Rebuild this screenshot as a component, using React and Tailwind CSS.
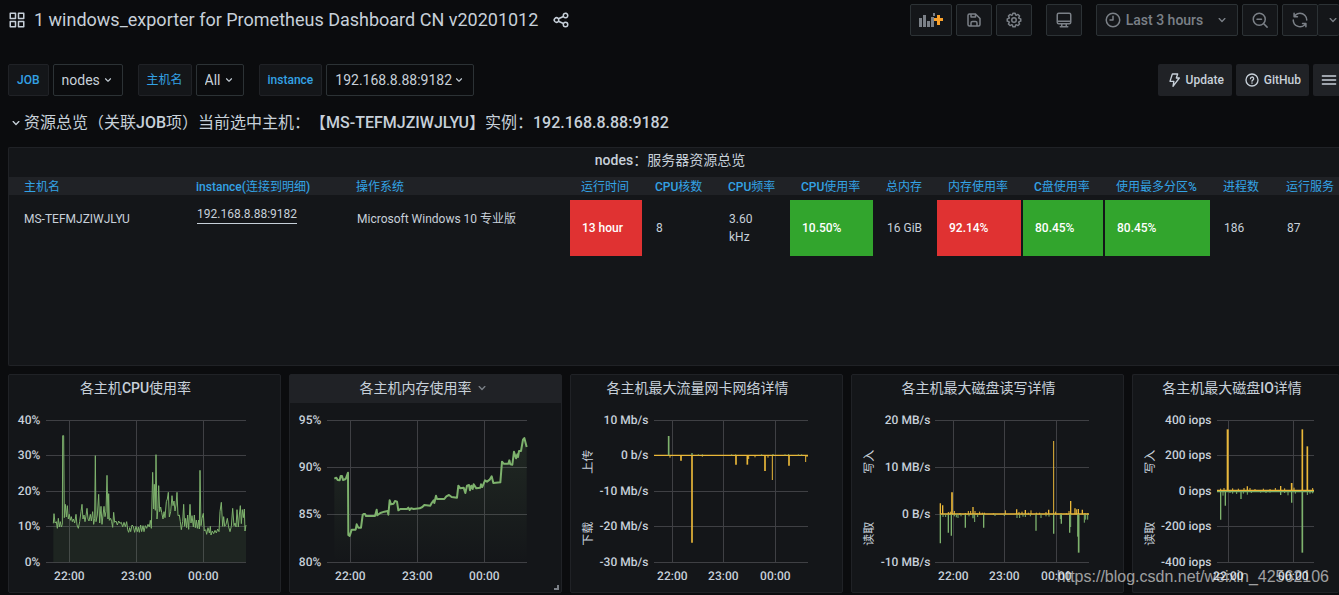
import React, { useState } from 'react';

const ICONS = {
  apps: 'M10,13H3a1,1,0,0,0-1,1v7a1,1,0,0,0,1,1h7a1,1,0,0,0,1-1V14A1,1,0,0,0,10,13ZM9,20H4V15H9ZM21,2H14a1,1,0,0,0-1,1v7a1,1,0,0,0,1,1h7a1,1,0,0,0,1-1V3A1,1,0,0,0,21,2ZM20,9H15V4h5Zm1,4H14a1,1,0,0,0-1,1v7a1,1,0,0,0,1,1h7a1,1,0,0,0,1-1V14A1,1,0,0,0,21,13Zm-1,7H15V15h5ZM10,2H3A1,1,0,0,0,2,3v7a1,1,0,0,0,1,1h7a1,1,0,0,0,1-1V3A1,1,0,0,0,10,2ZM9,9H4V4H9Z',
  share: 'M18,14a4,4,0,0,0-3.08,1.48l-5.1-2.35a3.64,3.64,0,0,0,0-2.26l5.1-2.35A4,4,0,1,0,14,6a4.17,4.17,0,0,0,.07.71L8.79,9.14a4,4,0,1,0,0,5.72l5.28,2.43A4.17,4.17,0,0,0,14,18a4,4,0,1,0,4-4ZM18,4a2,2,0,1,1-2,2A2,2,0,0,1,18,4ZM6,14a2,2,0,1,1,2-2A2,2,0,0,1,6,14Zm12,6a2,2,0,1,1,2-2A2,2,0,0,1,18,20Z',
  angleDown: 'M17,9.17a1,1,0,0,0-1.41,0L12,12.71,8.46,9.17a1,1,0,0,0-1.41,0,1,1,0,0,0,0,1.42l4.24,4.24a1,1,0,0,0,1.42,0L17,10.59A1,1,0,0,0,17,9.17Z',
  save: 'M20.71,9.29l-6-6a1,1,0,0,0-.32-.21A1.09,1.09,0,0,0,14,3H6A3,3,0,0,0,3,6V18a3,3,0,0,0,3,3H18a3,3,0,0,0,3-3V10A1,1,0,0,0,20.71,9.29ZM9,5h4V7H9Zm6,14H9V16a1,1,0,0,1,1-1h4a1,1,0,0,1,1,1Zm4-1a1,1,0,0,1-1,1H17V16a3,3,0,0,0-3-3H10a3,3,0,0,0-3,3v3H6a1,1,0,0,1-1-1V6A1,1,0,0,1,6,5H7V8A1,1,0,0,0,8,9h6a1,1,0,0,0,1-1V6.41l4,4Z',
  cog: 'M21.32,9.55l-1.89-.63.89-1.78A1,1,0,0,0,20.13,6L18,3.87a1,1,0,0,0-1.15-.19l-1.78.89-.63-1.89A1,1,0,0,0,13.5,2h-3a1,1,0,0,0-.95.68L8.92,4.57,7.14,3.68A1,1,0,0,0,6,3.87L3.87,6a1,1,0,0,0-.19,1.15l.89,1.78-1.89.63A1,1,0,0,0,2,10.5v3a1,1,0,0,0,.68.95l1.89.63-.89,1.78A1,1,0,0,0,3.87,18L6,20.13a1,1,0,0,0,1.15.19l1.78-.89.63,1.89a1,1,0,0,0,.95.68h3a1,1,0,0,0,.95-.68l.63-1.89,1.78.89A1,1,0,0,0,18,20.13L20.13,18a1,1,0,0,0,.19-1.15l-.89-1.78,1.89-.63A1,1,0,0,0,22,13.5v-3A1,1,0,0,0,21.32,9.55ZM20,12.78l-1.2.4A2,2,0,0,0,17.64,16l.57,1.14-1.1,1.1L16,17.64a2,2,0,0,0-2.79,1.16l-.4,1.2H11.22l-.4-1.2A2,2,0,0,0,8,17.64l-1.14.57-1.1-1.1L6.36,16A2,2,0,0,0,5.2,13.18L4,12.78V11.22l1.2-.4A2,2,0,0,0,6.36,8L5.79,6.89l1.1-1.1L8,6.36A2,2,0,0,0,10.82,5.2l.4-1.2h1.56l.4,1.2A2,2,0,0,0,16,6.36l1.14-.57,1.1,1.1L17.64,8a2,2,0,0,0,1.16,2.79l1.2.4ZM12,8a4,4,0,1,0,4,4A4,4,0,0,0,12,8Zm0,6a2,2,0,1,1,2-2A2,2,0,0,1,12,14Z',
  sync: 'M19.91,15.51H15.38a1,1,0,0,0,0,2h2.4A8,8,0,0,1,4,12a1,1,0,0,0-2,0,10,10,0,0,0,16.88,7.23V21a1,1,0,0,0,2,0V16.5A1,1,0,0,0,19.91,15.51ZM12,2A10,10,0,0,0,5.12,4.77V3a1,1,0,0,0-2,0V7.5a1,1,0,0,0,1,1h4.5a1,1,0,0,0,0-2H6.22A8,8,0,0,1,20,12a1,1,0,0,0,2,0A10,10,0,0,0,12,2Z',
};

// outline icons drawn with strokes instead of fills
const LINES = {
  monitor: 'M5 3h14a2 2 0 0 1 2 2v10a2 2 0 0 1-2 2H5a2 2 0 0 1-2-2V5a2 2 0 0 1 2-2zM3 13.5h18M9 17v4M15 17v4M7 21h10',
  clock: 'M12 3a9 9 0 1 0 0 18 9 9 0 0 0 0-18zM12 7v5H8',
  zoomOut: 'M11 3a8 8 0 1 0 0 16 8 8 0 0 0 0-16zM17 17l4.5 4.5M8 11h6',
  question: 'M12 3a9 9 0 1 0 0 18 9 9 0 0 0 0-18zM9.7 10a2.4 2.4 0 1 1 3.5 2.1c-.8.4-1.2.8-1.2 1.6M12 16.2v.6',
  bolt: 'M9.5 3h8l-2 6H20l-9.5 12.5 1.3-7.5H6z',
  bars: 'M2 6h20M2 12h20M2 18h20',
};

function Icon({ name, size = 16, className = '' }) {
  return (
    <svg width={size} height={size} viewBox="0 0 24 24" className={`shrink-0 ${className}`} aria-hidden="true">
      {ICONS[name] ? (
        <path d={ICONS[name]} fill="currentColor" />
      ) : (
        <path d={LINES[name]} fill="none" stroke="currentColor" strokeWidth="2" strokeLinecap="round" strokeLinejoin="round" />
      )}
    </svg>
  );
}

function AddPanelIcon() {
  return (
    <svg width="25" height="16" viewBox="0 0 25 16" aria-hidden="true">
      <path fill="#7b8087" d="M0 6h3v9H0zM4 3h3v12H4zM8 9h3v6H8zM12 5h3v10h-3zM14 1h2v3h-2z" />
      <path fill="#f9a12b" d="M18 3h3v3h3v3h-3v4h-3V9h-3V6h3z" />
    </svg>
  );
}

// Latin runs are set in medium, Chinese runs stay regular
function Mixed({ text }) {
  return text.split(/([\x21-\x7e]+)/).map((part, i) => (
    <span key={i} className={i % 2 ? 'font-medium' : 'font-normal'}>{part}</span>
  ));
}

function ToolButton({ label, className = 'w-9', children }) {
  return (
    <button
      aria-label={label}
      className={`flex h-8 shrink-0 items-center justify-center rounded-xs border border-[#2c3235] bg-[#141619] text-[#7b8087] ${className}`}
    >
      {children}
    </button>
  );
}

function Variable({ id, label, options, width }) {
  const [value, setValue] = useState(options[0]);
  return (
    <div className="flex gap-1">
      <label htmlFor={id} className="flex h-8 items-center rounded-xs border border-[#202226] bg-[#141619] px-2 text-xs text-[#33a2e5]">
        <Mixed text={label} />
      </label>
      <div className="relative">
        <select
          id={id}
          value={value}
          onChange={(e) => setValue(e.target.value)}
          className={`h-8 appearance-none rounded-xs border border-[#2c3235] bg-[#0b0c0e] pl-2 text-sm text-[#c7d0d9] outline-none ${width}`}
        >
          {options.map((o) => <option key={o}>{o}</option>)}
        </select>
        <Icon name="angleDown" size={14} className="pointer-events-none absolute right-2 top-[9px]" />
      </div>
    </div>
  );
}

const COLUMNS = [
  { title: '主机名', value: 'MS-TEFMJZIWJLYU', width: 'w-[176px]', cell: 'align-top' },
  { title: 'instance(连接到明细)', value: '192.168.8.88:9182', width: 'w-[160px]', link: true },
  { title: '操作系统', value: 'Microsoft Windows 10 专业版', width: 'w-[225px]', cell: 'align-top' },
  { title: '运行时间', value: '13 hour', width: 'w-[74px]', cell: 'bg-[#e03232] font-medium text-white' },
  { title: 'CPU核数', value: '8', width: 'w-[73px]' },
  { title: 'CPU频率', value: '3.60 kHz', width: 'w-[73px]', cell: 'pr-6' },
  { title: 'CPU使用率', value: '10.50%', width: 'w-[85px]', cell: 'bg-[#32a52d] font-medium text-white' },
  { title: '总内存', value: '16 GiB', width: 'w-[62px]', cell: 'whitespace-nowrap' },
  { title: '内存使用率', value: '92.14%', width: 'w-[86px]', cell: 'bg-[#e03232] font-medium text-white' },
  { title: 'C盘使用率', value: '80.45%', width: 'w-[82px]', cell: 'bg-[#32a52d] font-medium text-white' },
  { title: '使用最多分区%', value: '80.45%', width: 'w-[107px]', cell: 'bg-[#32a52d] font-medium text-white' },
  { title: '进程数', value: '186', width: 'w-[63px]' },
  { title: '运行服务', value: '87', width: '' },
];

function ServerTable() {
  return (
    <table className="w-full table-fixed border-separate border-spacing-0 text-left text-xs leading-[18px]">
      <thead>
        <tr className="bg-[#202226] text-[#33a2e5]">
          {COLUMNS.map((c) => (
            <th key={c.title} className={`whitespace-nowrap p-0 pl-[11px] pt-0.5 leading-4 first:pl-[15px] ${c.width}`}>
              <Mixed text={c.title} />
            </th>
          ))}
        </tr>
      </thead>
      <tbody>
        <tr>
          {COLUMNS.map((c) => (
            <td
              key={c.title}
              className={`h-[61px] border-r-2 border-t-5 border-transparent bg-clip-padding pl-3 first:pl-[15px] ${c.link ? 'pt-[5px] align-top' : 'py-[10px]'} ${c.cell || ''}`}
            >
              {c.link ? <a href="#detail" className="inline-block border-b border-[#c7d0d9]">{c.value}</a> : c.value}
            </td>
          ))}
        </tr>
      </tbody>
    </table>
  );
}

const GREEN = '#7eb26d';
const YELLOW = '#eab839';

// Every chart is drawn in a box of 3 units per pixel.
const CHARTS = [
  {
    title: '各主机CPU使用率',
    box: [27, 813],
    plot: [138, 738],
    labelX: 121,
    yTicks: [['40%', 166], ['30%', 271], ['20%', 379], ['10%', 485], ['0%', 592]],
    xTicks: [['22:00', 208], ['23:00', 409], ['00:00', 610]],
    base: 592,
    fill: 'rgba(126,178,109,0.1)',
    series: [
      {
        color: GREEN,
        points: '160,475 162,446 165,474 169,470 172,490 175,460 178,486 181,470 184,486 187,478 188,212 191,212 193,458 196,418 199,456 202,422 205,462 208,448 211,466 214,455 217,470 220,462 224,474 228,448 231,480 235,490 239,470 243,440 246,418 249,462 252,450 255,470 258,452 261,430 264,462 267,468 271,448 274,468 278,440 281,478 284,460 286,272 288,470 292,450 296,388 299,474 303,424 306,478 309,450 312,424 315,455 318,440 321,331 324,462 326,386 328,466 332,460 335,470 338,487 341,442 344,472 348,468 352,480 356,468 360,475 364,472 368,486 372,472 376,485 380,470 383,494 386,502 389,488 392,500 396,480 400,484 404,502 408,484 412,500 415,486 418,502 422,480 425,500 429,482 432,500 436,482 440,490 444,478 448,486 451,466 454,490 458,322 461,432 463,358 466,436 468,269 471,462 474,430 476,362 479,440 482,426 485,442 489,462 492,440 495,458 499,410 502,402 505,382 508,456 512,440 516,392 519,422 522,408 525,438 528,420 531,382 534,452 538,450 541,470 544,494 548,470 551,418 554,484 557,460 560,488 563,450 566,493 570,418 573,474 576,452 580,486 583,450 586,488 589,465 592,490 596,465 598,492 600,316 603,482 606,460 610,445 613,498 617,494 620,508 624,488 628,504 631,484 633,510 637,498 641,506 645,496 649,504 653,492 657,500 660,440 664,412 668,484 671,455 674,484 678,478 682,460 686,486 690,500 694,484 698,430 702,482 705,474 708,486 711,434 715,486 718,450 721,422 724,476 727,434 730,458 733,432 735,498 738,480',
      },
    ],
  },
  {
    title: '各主机内存使用率',
    box: [15, 813],
    plot: [126, 726],
    labelX: 109,
    menu: true,
    yTicks: [['95%', 166], ['90%', 307], ['85%', 448], ['80%', 592]],
    xTicks: [['22:00', 196], ['23:00', 397], ['00:00', 598]],
    base: 592,
    fill: 'url(#memFill)',
    series: [
      {
        color: GREEN,
        width: 6,
        points: '148,341 154,338 158,345 164,346 167,333 171,333 174,345 182,342 185,334 189,323 190,510 194,513 200,494 212,494 215,478 220,488 228,488 233,450 236,447 240,447 243,453 270,453 275,434 277,451 286,444 298,440 308,438 310,449 314,406 318,418 326,416 330,408 336,410 340,436 346,432 366,432 370,428 374,435 378,430 386,432 404,430 412,426 418,420 436,422 440,414 446,406 448,414 453,392 456,402 478,402 484,394 492,390 500,396 516,398 520,362 526,370 536,368 541,384 546,362 552,360 555,376 559,362 563,372 566,358 574,370 586,368 588,358 592,366 600,346 606,350 614,344 620,334 625,354 646,352 651,290 656,296 670,296 673,286 676,298 682,299 687,260 693,280 697,268 699,276 702,258 708,258 714,224 718,219 725,246',
      },
    ],
  },
  {
    title: '各主机最大流量网卡网络详情',
    box: [18, 813],
    plot: [267, 729],
    labelX: 250,
    yTicks: [['10 Mb/s', 166], ['0 b/s', 271], ['-10 Mb/s', 379], ['-20 Mb/s', 485], ['-30 Mb/s', 592]],
    xTicks: [['22:00', 322], ['23:00', 475], ['00:00', 631]],
    sides: [['上传', 290], ['下载', 506]],
    sideX: 80,
    spikes: [
      [GREEN, 271, '311,213,5 381,264,4 400,268 412,268 500,268 512,268 590,268 624,267 660,268 671,267 700,268 710,268'],
      [YELLOW, 271, '315,278 348,287,5 381,533,5 412,275 513,299,5 547,299,5 551,282 570,277 600,318,5 609,278 622,345 672,302,5 722,291 726,276'],
    ],
    baseline: [[YELLOW, 271]],
  },
  {
    title: '各主机最大磁盘读写详情',
    box: [21, 813],
    plot: [270, 732],
    start: 285,
    labelX: 256,
    yTicks: [['20 MB/s', 166], ['10 MB/s', 307], ['0 B/s', 448], ['-10 MB/s', 592]],
    xTicks: [['22:00', 325], ['23:00', 478], ['00:00', 634]],
    sides: [['写入', 290], ['读取', 506]],
    sideX: 83,
    spikes: [
      [GREEN, 448, '286,535,4 294,456 302,456 310,503,4 319,512,4 328,454 334,457 339,459 348,454 361,488,4 372,454 384,460,4 389,471 398,456 416,488,4 450,453 478,453 516,459 524,459 534,455 541,456 556,454 573,497,4 588,459 603,454 612,455 626,506,4 646,462 649,476,4 674,503,4 677,486 701,563,5 698,515 718,473 722,464 728,464'],
      [YELLOW, 448, '286,415,4 293,421,4 310,441 316,440 321,382,5 328,438 345,444 361,444 370,438 377,438 384,426,4 390,438 396,444 404,440 412,443 418,443 445,445 481,436 515,433,4 522,441 531,440 541,435,4 550,443 558,436 574,443 584,443 603,441 611,434,4 626,228 632,440 648,445 664,445 672,438 677,408,4 690,430,4 695,433 700,432,4 712,434,4 720,444 728,445'],
    ],
    baseline: [[YELLOW, 447]],
  },
  {
    title: '各主机最大磁盘IO详情',
    box: [249, 618],
    plot: [501, 792],
    labelX: 484,
    yTicks: [['400 iops', 166], ['200 iops', 271], ['0 iops', 379], ['-200 iops', 485], ['-400 iops', 592]],
    xTicks: [['22:00', 535], ['00:00', 730]],
    sides: [['写入', 290], ['读取', 506]],
    sideX: 311,
    last: true,
    spikes: [
      [GREEN, 379, '512,464,4 519,392 526,422,4 540,384 548,386 560,387 573,402,4 580,386 592,389 604,384 632,383 648,384 660,383 692,390,4 704,384 714,391 725,413,4 736,386 757,563,5 772,390 780,386 788,385'],
      [YELLOW, 376, '512,371 522,369 533,193,6 548,370 565,371 582,369 592,364,4 600,369 615,372 640,371 660,372 676,369 692,363,4 704,370 725,354,5 732,368 757,193,5 772,244,5 788,369'],
    ],
    baseline: [[GREEN, 380], [YELLOW, 376]],
  },
];

function Chart({ box, plot, start, labelX, yTicks, xTicks, base, fill, series = [], sides = [], sideX, spikes = [], baseline = [] }) {
  const [left, width] = box;
  const [x0, x1] = plot;
  return (
    <svg
      viewBox={`${left} 114 ${width} 567`}
      className="block h-auto w-full"
      fontSize="36"
      fontWeight="500"
      fill="#c7d0d9"
      textRendering="geometricPrecision"
    >
      <defs>
        <linearGradient id="memFill" x1="0" y1="0" x2="0" y2="1">
          <stop offset="0" stopColor={GREEN} stopOpacity="0.12" />
          <stop offset="1" stopColor={GREEN} stopOpacity="0" />
        </linearGradient>
      </defs>
      <g stroke="#3f4044" strokeWidth="3" shapeRendering="crispEdges">
        {yTicks.map(([label, y]) => <path key={label} d={`M${x0} ${y}H${x1}`} />)}
        {xTicks.map(([label, x]) => <path key={label} d={`M${x} 166V592`} />)}
      </g>
      {yTicks.map(([label, y]) => <text key={label} x={labelX} y={y + 11} textAnchor="end">{label}</text>)}
      {xTicks.map(([label, x]) => <text key={label} x={x} y="644" textAnchor="middle">{label}</text>)}
      {sides.map(([label, y]) => (
        <text key={label} textAnchor="middle" fontWeight="400" transform={`translate(${sideX} ${y}) rotate(-90)`}>{label}</text>
      ))}
      {series.map((s) => {
        const first = s.points.split(',')[0];
        return (
          <g key={s.color}>
            <path d={`M${first} ${base}L${s.points}V${base}Z`} fill={fill} />
            <polyline points={s.points} fill="none" stroke={s.color} strokeWidth={s.width || 3} strokeLinejoin="round" />
          </g>
        );
      })}
      {baseline.map(([color, y]) => <path key={color} d={`M${start || x0} ${y}H${x1}`} stroke={color} strokeWidth="4" />)}
      {spikes.map(([color, zero, list]) => list.split(' ').map((item) => {
        const [x, y, w] = item.split(',');
        return <path key={color + item} d={`M${x} ${zero}V${y}`} stroke={color} strokeWidth={w || 3} />;
      }))}
    </svg>
  );
}

function ChartPanel({ chart }) {
  return (
    <section className={`relative min-w-0 rounded-xs border border-[#202226] bg-[#141619] ${chart.last ? 'border-r-0' : ''}`}>
      <h2 className={`flex h-7 items-center justify-center pb-0.5 text-sm ${chart.menu ? 'bg-[#202226]' : ''} ${chart.last ? 'pr-2' : 'pr-[18px]'}`}>
        <span className={chart.menu ? 'pl-4' : ''}><Mixed text={chart.title} /></span>
        {chart.menu && <Icon name="angleDown" className="ml-0.5 text-[#7b8087]" />}
      </h2>
      <Chart {...chart} />
      {chart.menu && <span className="absolute bottom-0.5 right-0.5 size-[5px] border-b-2 border-r-2 border-[#7b8087]" />}
    </section>
  );
}

export default function App() {
  return (
    <main className="relative min-h-screen overflow-hidden bg-[#0b0c0e] pl-2 font-[Roboto,'Noto_Sans_CJK_SC',sans-serif] text-[#c7d0d9]">
      <header className="flex h-10 items-center justify-between">
        <div className="flex items-center">
          <Icon name="apps" size={18} />
          <h1 className="ml-2 text-lg">1 windows_exporter for Prometheus Dashboard CN v20201012</h1>
          <button aria-label="Share dashboard" className="ml-[14px]"><Icon name="share" size={18} /></button>
        </div>
        <div className="flex items-center gap-1">
          <ToolButton label="Add panel" className="w-[42px]"><AddPanelIcon /></ToolButton>
          <ToolButton label="Save dashboard"><Icon name="save" size={18} /></ToolButton>
          <ToolButton label="Dashboard settings"><Icon name="cog" size={18} /></ToolButton>
          <ToolButton label="Cycle view mode" className="mx-[10px] w-9"><Icon name="monitor" size={18} /></ToolButton>
          <ToolButton label="Time range" className="w-[142px] text-sm font-medium">
            <Icon name="clock" size={18} />
            <span className="ml-1">Last 3 hours</span>
            <Icon name="angleDown" className="ml-[11px]" />
          </ToolButton>
          <ToolButton label="Zoom out"><Icon name="zoomOut" size={18} /></ToolButton>
          <div className="flex">
            <ToolButton label="Refresh" className="w-9"><Icon name="sync" size={18} /></ToolButton>
            <ToolButton label="Refresh interval" className="w-[21px] border-x-0 pl-2"><Icon name="angleDown" /></ToolButton>
          </div>
        </div>
      </header>

      <div className="mt-6 flex items-center justify-between">
        <div className="flex gap-[15px]">
          <Variable id="job" label="JOB" options={['nodes']} width="w-[70px]" />
          <Variable id="hostname" label="主机名" options={['All']} width="w-12" />
          <Variable id="instance" label="instance" options={['192.168.8.88:9182']} width="w-[148px]" />
        </div>
        <nav className="flex gap-1 text-xs font-medium">
          <a href="#update" className="flex h-8 items-center gap-1 rounded-xs bg-[#202226] px-2"><Icon name="bolt" />Update</a>
          <a href="#github" className="flex h-8 items-center gap-1 rounded-xs bg-[#202226] px-2"><Icon name="question" />GitHub</a>
          <button aria-label="Dashboards" className="flex h-8 w-[26px] items-center rounded-l-xs bg-[#202226] pl-2"><Icon name="bars" /></button>
        </nav>
      </div>

      <button className="mt-[15px] flex h-6 items-center text-base">
        <Icon name="angleDown" />
        <span className="[text-spacing-trim:space-all]">
          <Mixed text="资源总览（关联JOB项）当前选中主机：【MS-TEFMJZIWJLYU】实例：192.168.8.88:9182" />
        </span>
      </button>

      <section className="mt-3 min-h-[219px] rounded-l-xs border border-r-0 border-[#202226] bg-[#141619]">
        <h2 className="flex h-[29px] items-center justify-center pb-[5px] pr-2 text-sm"><Mixed text="nodes：服务器资源总览" /></h2>
        <ServerTable />
      </section>

      <div className="mt-2 grid grid-cols-[273fr_273fr_273fr_273fr_207fr] items-start gap-2">
        {CHARTS.map((chart) => <ChartPanel key={chart.title} chart={chart} />)}
      </div>

      <span className="absolute bottom-1.5 right-[10px] font-['Liberation_Sans',sans-serif] text-base leading-6 text-white/60">
        https://blog.csdn.net/weixin_42562106
      </span>
    </main>
  );
}
